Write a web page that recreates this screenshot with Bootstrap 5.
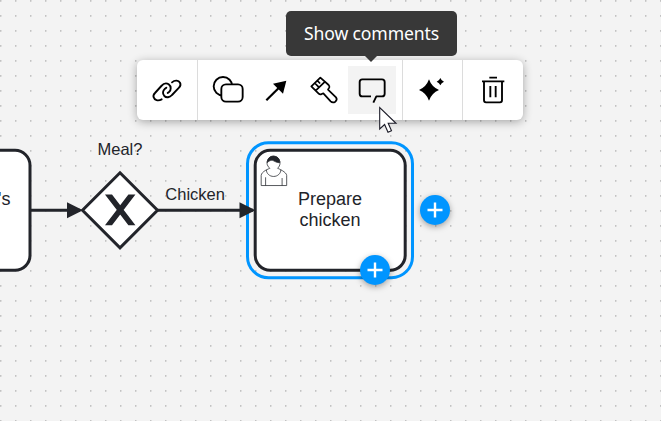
<!DOCTYPE html>
<html lang="en">
<head>
<meta charset="utf-8">
<meta name="viewport" content="width=device-width, initial-scale=1">
<title>Process modeler</title>
<link href="https://cdn.jsdelivr.net/npm/bootstrap@5.3.0/dist/css/bootstrap.min.css" rel="stylesheet">
<style>
body { background: #f3f3f3; }
.canvas { width: 661px; height: 421px; }
.diagram { font-family: "Liberation Sans", Arial, sans-serif; fill: #22242a; }
.menu-bar { left: 137px; top: 60px; width: 386px; height: 60px; border-radius: 6px; box-shadow: 0 2px 10px rgba(0,0,0,.32); }
.tool-group { padding: 6px; }
.tool-group + .tool-group { border-left: 1px solid #dcdcdc; }
.tool-group.tight { padding-right: 5px; }
.tool { width: 48px; height: 48px; }
.tool.active { background: #f3f3f3; }
.tool svg { width: 48px; height: 48px; fill: none; stroke: #000; stroke-width: 5.6; stroke-linecap: round; stroke-linejoin: round; }
.tip { left: 286px; top: 11px; width: 171px; height: 45px; border-radius: 5px; background: #383838; font: 17.6px/1 "Noto Sans", sans-serif; letter-spacing: -.15px; }
.tip::after { content: ""; position: absolute; left: 79px; top: 45px; border: 6px solid transparent; border-top-color: #383838; border-bottom: 0; }
.add { width: 30px; height: 30px; background: #0095ff; box-shadow: 0 2px 6px rgba(0,0,0,.35); }
.add-right { left: 420px; top: 195px; }
.add-bottom { left: 360px; top: 255px; }
.pointer-arrow { left: 370px; top: 98px; }
</style>
</head>
<body class="overflow-hidden">
<main class="canvas position-relative overflow-hidden">
  <svg class="diagram d-block" width="661" height="421">
    <defs>
      <pattern id="grid" width="15" height="15" patternUnits="userSpaceOnUse">
        <rect width="1" height="1" fill="#c2c2c2"/><rect x="1" width="1" height="1" fill="#dcdcdc"/>
        <rect y="1" width="1" height="1" fill="#cccccc"/><rect x="1" y="1" width="1" height="1" fill="#e2e2e2"/>
      </pattern>
    </defs>
    <rect width="661" height="421" fill="url(#grid)"/>
    <g fill="#fff" stroke="#22242a" stroke-width="3">
      <rect x="-120" y="150.3" width="150" height="120" rx="15"/>
      <path d="M120 172.8 157.5 210.3 120 247.8 82.5 210.3z"/>
      <rect x="255.2" y="150.3" width="150" height="120" rx="15"/>
      <path d="M30 210.3H80M157.5 210.3H253"/>
    </g>
    <rect x="247.5" y="142.7" width="165" height="135" rx="21" fill="none" stroke="#0095ff" stroke-width="3"/>
    <path d="M67 202.3 83 210.3 67 218.3zM239.5 202.3 255.5 210.3 239.5 218.3z"/>
    <path transform="translate(82.5 172.8) scale(1.5)" stroke="#22242a" d="m16 15 7.43 9.71-7.43 9.71h3.43l5.71-7.46 5.71 7.46h3.43l-7.43-9.71 7.43-9.71h-3.43l-5.71 7.46-5.71-7.46z"/>
    <g transform="translate(277.6 168.3) scale(1.5)" fill="#fff" stroke="#22242a" stroke-width=".5">
      <path d="M0 0c.909-.845 1.594-2.049 1.594-3.385 0-2.554-1.805-4.622-4.357-4.622-2.552 0-4.288 2.068-4.288 4.622 0 1.348.974 2.562 1.896 3.405-.529.187-5.669 2.097-5.794 4.756v6.718h17V4.776C6.051 2.478.523.186 0 0zM-8 6v5.5M3 11.5V6.5"/>
      <path d="M2.162 1.009C2.162 3.456.004 5.44-2.659 5.44c-2.663 0-4.822-1.981-4.822-4.431" fill="none"/>
      <path d="M-6.9-3.8s2.251-2.358 4.274-1.177c2.024 1.181 4.221 1.537 4.124.965C1.4-4.582 1.381-7.803-2.693-8.148c-3.572 0-4.208 3.15-4.207 4.348z" fill="#22242a"/>
    </g>
    <text x="97.5" y="155" font-size="16.5">Meal?</text>
    <text x="165.3" y="200" font-size="16.5">Chicken</text>
    <text x="330" y="205" font-size="18" text-anchor="middle">Prepare</text>
    <text x="330" y="226.3" font-size="18" text-anchor="middle">chicken</text>
    <text x="10.5" y="205" font-size="18" text-anchor="end">'s</text>
  </svg>

  <div class="menu-bar position-absolute d-flex bg-white" role="toolbar">
    <div class="tool-group d-flex">
      <button class="tool btn p-0 border-0 rounded-0" aria-label="Link"><svg viewBox="39 48 144 144"><path d="M95 148C84 154 73 150 71 142 69 137 72 132 75 129L94 108C101 100 109 98 116 103 124 109 124 120 117 126L113 129M126 97C135 89 146 91 150 98 153 104 151 109 147 113L126 135C119 143 109 144 103 138 97 131 99 122 105 116L109 113"/></svg></button>
    </div>
    <div class="tool-group d-flex">
      <button class="tool btn p-0 border-0 rounded-0" aria-label="Change element"><svg viewBox="222 48 144 144"><circle cx="279" cy="109" r="28"/><rect x="274" y="103" width="64" height="52" rx="14" fill="#fff"/></svg></button>
      <button class="tool btn p-0 border-0 rounded-0" aria-label="Connect"><svg viewBox="-24 48 144 144"><path stroke-width="6.5" stroke-linecap="butt" d="M19 151 60 110"/><path d="M79 92 69 131 39 101z" fill="#000" stroke="none"/></svg></button>
      <button class="tool btn p-0 border-0 rounded-0" aria-label="Color"><svg viewBox="120 48 144 144"><path stroke-width="5.2" d="M181 83 154 109 176 131Q180 135 185 132L190 130 212 154Q218 160 226 155 233 149 228 142L204 119 208 112Q209 108 206 105zM167 122 195 95M172 92 179 99M164 99 175 110"/></svg></button>
      <button class="tool active btn p-0 border-0 rounded-0" aria-label="Show comments"><svg viewBox="264 48 144 144"><path stroke-linecap="butt" d="M333 139H307Q299 139 299 131V96Q299 88 307 88H366Q374 88 374 96V131Q374 139 366 139H349L340 158"/></svg></button>
    </div>
    <div class="tool-group tight d-flex">
      <button class="tool btn p-0 border-0 rounded-0" aria-label="Suggest"><svg viewBox="57 48 144 144"><path fill="#000" stroke="none" d="M117 88Q125 111 147 120 125 129 117 152 109 129 87 120 109 111 117 88zM151 84Q154 92 162 95 154 98 151 106 148 98 140 95 148 92 151 84z"/></svg></button>
    </div>
    <div class="tool-group d-flex">
      <button class="tool btn p-0 border-0 rounded-0" aria-label="Delete"><svg viewBox="237 48 144 144"><path stroke-linecap="butt" d="M276 94H343M298 83H321M282 94V151Q282 157 288 157H330Q336 157 336 151V94M301 108V142M317 108V142"/></svg></button>
    </div>
  </div>

  <div class="tip position-absolute d-flex align-items-center justify-content-center text-white text-nowrap" role="tooltip">Show comments</div>

  <button class="add add-right position-absolute btn p-0 border-0 rounded-circle d-flex" aria-label="Append"><svg width="30" height="30"><path d="M15 7.5v15M7.5 15h15" stroke="#fff" stroke-width="2.4"/></svg></button>
  <button class="add add-bottom position-absolute btn p-0 border-0 rounded-circle d-flex" aria-label="Attach"><svg width="30" height="30"><path d="M15 7.5v15M7.5 15h15" stroke="#fff" stroke-width="2.4"/></svg></button>

  <svg class="pointer-arrow position-absolute" width="36" height="42"><path d="M9.7 9.5V31L14.6 26.5 18 34.3 21.5 32.8 18.2 25.3H26z" fill="#fff" stroke="#1c1c28" stroke-width="1.1"/></svg>
</main>
<script src="https://cdn.jsdelivr.net/npm/bootstrap@5.3.0/dist/js/bootstrap.bundle.min.js"></script>
</body>
</html>
